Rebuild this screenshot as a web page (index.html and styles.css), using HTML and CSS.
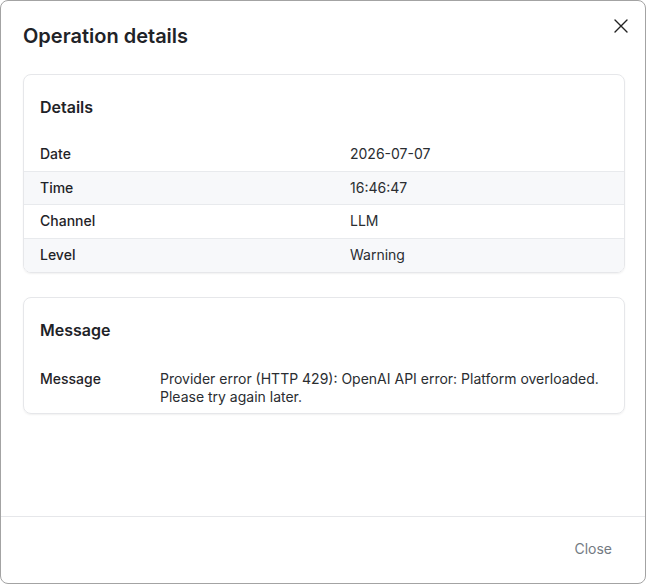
FILE: index.html
```html
<!DOCTYPE html>
<html>
    <head>
        <meta charset="UTF-8">
        <meta name="viewport" content="width=device-width, initial-scale=1.0">
        <title>Operation details</title>
        <link rel="stylesheet" href="styles.css">
    </head>
    <body>
        <div class="modal">
            <div class="modal-header">
                <h2 class="modal-title">Operation details</h2>
                <button class="modal-x" aria-label="Close">
                    <svg width="14" height="14" viewBox="0 0 14 14">
                        <path d="M1 1L13 13M13 1L1 13" stroke="#222" stroke-width="1.4" fill="none" stroke-linecap="round"/>
                    </svg>
                </button>
            </div>
            <div class="modal-body">
                <div class="card">
                    <h3 class="card-title">Details</h3>
                    <div class="rows">
                        <div class="row"><span class="label">Date</span><span class="value">2026-07-07</span></div>
                        <div class="row"><span class="label">Time</span><span class="value">16:46:47</span></div>
                        <div class="row"><span class="label">Channel</span><span class="value">LLM</span></div>
                        <div class="row"><span class="label">Level</span><span class="value">Warning</span></div>
                    </div>
                </div>
                <div class="card">
                    <h3 class="card-title">Message</h3>
                    <div class="rows">
                        <div class="row row-msg"><span class="label">Message</span><span class="value">Provider error (HTTP 429): OpenAI API error: Platform overloaded. Please try again later.</span></div>
                    </div>
                </div>
            </div>
            <div class="modal-footer">
                <button class="btn-close">Close</button>
            </div>
        </div>
    </body>
</html>
```

FILE: styles.css
```css
body {
    margin: 0;
    font-family: Inter, "Noto Sans", sans-serif;
    color: #1f2328;
}

.modal {
    width: 646px;
    height: 584px;
    box-sizing: border-box;
    border: 1px solid #a3a3a3;
    border-radius: 8px;
    background: #fff;
    display: flex;
    flex-direction: column;
}

.modal-header {
    display: flex;
    justify-content: space-between;
    align-items: flex-start;
    padding: 21px 17px 0 22px;
}

.modal-title {
    margin: 0;
    font-size: 20px;
    line-height: 28px;
    font-weight: 600;
    color: #1f2328;
}

.modal-x {
    border: none;
    background: none;
    padding: 0;
    margin-top: -3px;
    width: 14px;
    height: 14px;
    cursor: pointer;
}

.modal-body {
    flex: 1;
    padding: 24px 20px 0 22px;
    display: flex;
    flex-direction: column;
    gap: 24px;
}

.card {
    border: 1px solid #e6e7ea;
    border-radius: 8px;
    box-shadow: 0 1px 2px rgba(0, 0, 0, 0.06);
    overflow: hidden;
}

.card-title {
    margin: 0;
    padding: 20px 16px 19px;
    font-size: 16px;
    line-height: 24px;
    font-weight: 600;
}

.row {
    display: grid;
    grid-template-columns: 310px 1fr;
    font-size: 14px;
    line-height: 32.7px;
    padding: 0 16px;
}

.row + .row {
    border-top: 1px solid #e8eaed;
}

.row:nth-child(even) {
    background: #f7f8fa;
}

.label {
    font-weight: 500;
}

.value {
    color: #2a2d31;
}

.row-msg {
    grid-template-columns: 120px 1fr;
    line-height: 18px;
    padding: 9px 16px 7px;
}

.modal-footer {
    border-top: 1px solid #e6e7ea;
    height: 67px;
    display: flex;
    justify-content: flex-end;
    align-items: center;
    padding: 0 22px 3px;
    box-sizing: border-box;
}

.btn-close {
    border: none;
    background: none;
    font-family: Inter, "Noto Sans", sans-serif;
    font-size: 14px;
    color: #737a82;
    padding: 8px 11px;
    cursor: pointer;
}
```
